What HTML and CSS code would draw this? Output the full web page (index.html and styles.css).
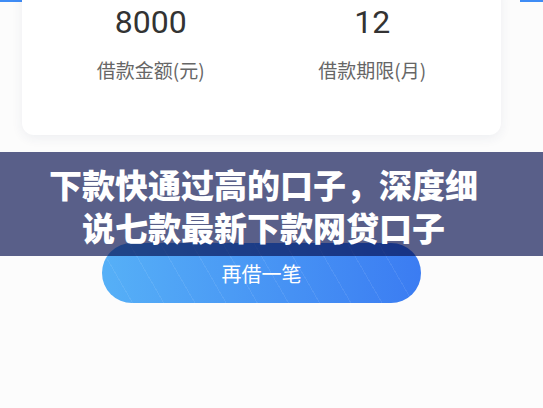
FILE: index.html
```html
<!DOCTYPE html>
<html lang="zh-CN">
<head>
    <meta charset="UTF-8">
    <meta name="viewport" content="width=device-width, initial-scale=1.0">
    <title>下款快通过高的口子</title>
    <link rel="stylesheet" href="styles.css">
</head>
<body>
    <div class="page">
        <div class="top-bar"></div>

        <div class="card">
            <div class="stat">
                <div class="stat-value">8000</div>
                <div class="stat-label">借款金额(元)</div>
            </div>
            <div class="stat">
                <div class="stat-value">12</div>
                <div class="stat-label">借款期限(月)</div>
            </div>
        </div>

        <button class="again-btn" type="button">再借一笔</button>

        <div class="title-banner">
            <h1>下款快通过高的口子，深度细<br>说七款最新下款网贷口子</h1>
        </div>
    </div>
</body>
</html>
```

FILE: styles.css
```css
body {
    margin: 0;
    background: #fcfcfc;
    font-family: "Noto Sans CJK SC", "Noto Sans", sans-serif;
}
.page {
    position: relative;
    width: 543px;
    height: 408px;
    overflow: hidden;
}
/* header edge peeking out beside the card */
.top-bar {
    height: 2px;
    background: linear-gradient(90deg, #3f8cf5 22px, transparent 22px, transparent 520px, #3f8cf5 520px);
}
.card {
    position: relative;
    display: flex;
    margin: -22px 42px 0 22px;
    padding: 22px 18px 52px;
    background: #fff;
    border-radius: 12px;
    box-shadow: 0 3px 12px rgba(40, 60, 100, 0.07);
}
.stat {
    flex: 1;
    text-align: center;
}
.stat-value {
    font-family: Roboto, "Noto Sans", sans-serif;
    font-size: 32px;
    line-height: 40px;
    color: #333;
}
.stat-label {
    margin-top: 15px;
    font-size: 19px;
    line-height: 26px;
    color: #666;
}
.again-btn {
    display: block;
    width: 319px;
    height: 60px;
    margin: 108px 0 0 102px;
    border: none;
    border-radius: 30px;
    background:
        repeating-linear-gradient(60deg, transparent 0 26px, rgba(255, 255, 255, 0.08) 26px 27px),
        linear-gradient(90deg, #56b0f7, #3b7cf2);
    color: #fff;
    font-family: "Noto Sans CJK SC", sans-serif;
    font-size: 20px;
}
.title-banner {
    position: absolute;
    top: 152px;
    left: 0;
    right: 0;
    height: 104px;
    box-sizing: border-box;
    padding: 11px 16px 0 0;
    background: rgba(5, 14, 78, 0.66);
    text-align: center;
}
.title-banner h1 {
    margin: 0;
    color: #fff;
    font-size: 33px;
    font-weight: 900;
    line-height: 43px;
}
```
